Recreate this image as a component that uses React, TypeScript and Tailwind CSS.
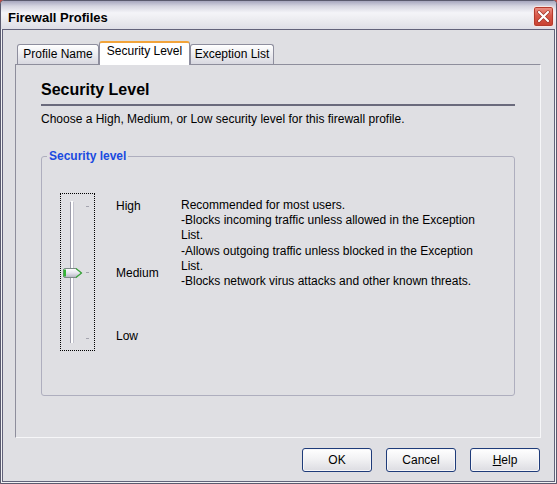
import React from "react";

function CloseButton() {
  return (
    <div className="mt-[5px] w-[21px] h-[21px] rounded-[3px] border border-[#f6e6e4] bg-[linear-gradient(to_bottom,#ec958a_0%,#d8594a_45%,#c8402f_100%)] shadow-[inset_0_0_0_1px_#b53a2c] flex items-center justify-center">
      <svg width="13" height="13" viewBox="0 0 13 13">
        <path d="M2 2 L11 11 M11 2 L2 11" stroke="#9a3024" strokeWidth="3.4" strokeLinecap="round" />
        <path d="M2 2 L11 11 M11 2 L2 11" stroke="#ffffff" strokeWidth="2.2" strokeLinecap="round" />
      </svg>
    </div>
  );
}

function Slider() {
  return (
    <div className="w-[35px] h-[158px] border border-dotted border-black shrink-0">
      <svg width="33" height="156" viewBox="0 0 33 156">
        <defs>
          <linearGradient id="thumbg" x1="0" y1="0" x2="0" y2="1">
            <stop offset="0" stopColor="#ffffff" />
            <stop offset="0.5" stopColor="#e4e4ec" />
            <stop offset="1" stopColor="#b4b4c2" />
          </linearGradient>
        </defs>
        <rect x="9" y="8" width="1" height="141" fill="#9c9caa" />
        <rect x="10" y="7" width="2" height="142" fill="#ffffff" />
        <rect x="12" y="8" width="1" height="141" fill="#c4c4ce" />
        <rect x="25" y="12" width="3" height="1" fill="#a4a4ae" />
        <rect x="25" y="78" width="3" height="1" fill="#a4a4ae" />
        <rect x="25" y="144" width="3" height="1" fill="#a4a4ae" />
        <path
          d="M4 74.5 H15 L20.5 79 L15 83.5 H4 Q2.5 83.5 2.5 82 V76 Q2.5 74.5 4 74.5 Z"
          fill="url(#thumbg)"
          stroke="#7c8a86"
          strokeWidth="1"
        />
        <path d="M15 74.5 L20.5 79 L15 83.5" fill="none" stroke="#3aa83a" strokeWidth="1.2" />
        <rect x="2.5" y="75.5" width="2.5" height="7" fill="#35b535" />
      </svg>
    </div>
  );
}

function Btn({ children }: { children: React.ReactNode }) {
  return (
    <div className="w-[70px] h-[24px] rounded-[3px] border border-[#1f3c7a] bg-[linear-gradient(to_bottom,#ffffff_0%,#f2f2f4_45%,#dcdce2_100%)] shadow-[inset_0_0_0_1px_#f6f6f8] flex items-center justify-center text-[12px] text-black">
      {children}
    </div>
  );
}

export default function App() {
  return (
    <div className="w-[557px] h-[484px] bg-[#c0504a]">
      <div
        className="w-[557px] h-[484px] flex flex-col border border-[#5a5a6e] rounded-t-[4px] bg-[#f2f2f4] overflow-hidden"
        style={{ fontFamily: '"Liberation Sans", Arial, sans-serif' }}
      >
        <div className="h-[28px] flex items-start justify-between pl-[7px] pr-[2px] bg-[linear-gradient(to_bottom,#a6a6be_0%,#d4d4e0_18%,#f4f4f8_42%,#eeeef2_60%,#dedee6_100%)]">
          <div className="pt-[9px] text-[13px] leading-[16px] font-bold text-black">Firewall Profiles</div>
          <CloseButton />
        </div>
        <div className="flex-1 mx-px mb-px border border-[#62627a] bg-[#dfdfe3] flex flex-col pl-[12px] pr-[13px] pt-[11px]">
          <div className="flex items-end h-[23px] pl-[2px] text-[12px] leading-[15px] text-black">
            <div className="w-[82px] h-[20px] border border-b-0 border-[#8e8e9e] rounded-t-[3px] bg-[linear-gradient(to_bottom,#ffffff_0%,#ececf0_50%,#d8d8e0_100%)] flex items-center justify-center">
              Profile Name
            </div>
            <div className="relative z-10 -mb-px w-[91px] h-[24px] border-x border-[#8e8e9e] border-t-2 border-t-[#f2a43a] rounded-t-[3px] bg-white flex items-start justify-center pt-[1px]">
              Security Level
            </div>
            <div className="w-[84px] h-[20px] border border-b-0 border-[#8e8e9e] rounded-t-[3px] bg-[linear-gradient(to_bottom,#ffffff_0%,#ececf0_50%,#d8d8e0_100%)] flex items-center justify-center">
              Exception List
            </div>
          </div>
          <div className="h-[374px] border-t border-l border-t-[#8e8e9c] border-l-[#8e8e9c] border-r border-b border-r-[#f6f6f8] border-b-[#f6f6f8] px-[25px] pt-[15px] text-black">
            <div className="text-[16px] leading-[20px] font-bold pb-[4px] border-b-2 border-[#6a6a7c]">
              Security Level
            </div>
            <div className="mt-[6px] text-[12px] leading-[15px]">
              Choose a High, Medium, or Low security level for this firewall profile.
            </div>
            <fieldset className="mt-[22px] border border-[#aeaebe] rounded-[3px] p-0 m-0">
              <legend className="ml-[5px] px-[2px] text-[12px] leading-[15px] font-bold text-[#1a4ae0]">
                Security level
              </legend>
              <div className="h-[231px] pt-[29px] pl-[18px] flex items-start text-[12px] leading-[15px]">
                <Slider />
                <div className="ml-[21px] w-[65px] flex flex-col">
                  <div className="mt-[6px]">High</div>
                  <div className="mt-[52px]">Medium</div>
                  <div className="mt-[48px]">Low</div>
                </div>
                <div className="mt-[5px] w-[312px] leading-[15.2px]">
                  Recommended for most users.
                  <br />
                  -Blocks incoming traffic unless allowed in the Exception List.
                  <br />
                  -Allows outgoing traffic unless blocked in the Exception List.
                  <br />
                  -Blocks network virus attacks and other known threats.
                </div>
              </div>
            </fieldset>
          </div>
          <div className="mt-[10px] flex justify-end gap-[14px] pr-px">
            <Btn>OK</Btn>
            <Btn>Cancel</Btn>
            <Btn>
              <span>
                <span className="underline">H</span>elp
              </span>
            </Btn>
          </div>
        </div>
      </div>
    </div>
  );
}
